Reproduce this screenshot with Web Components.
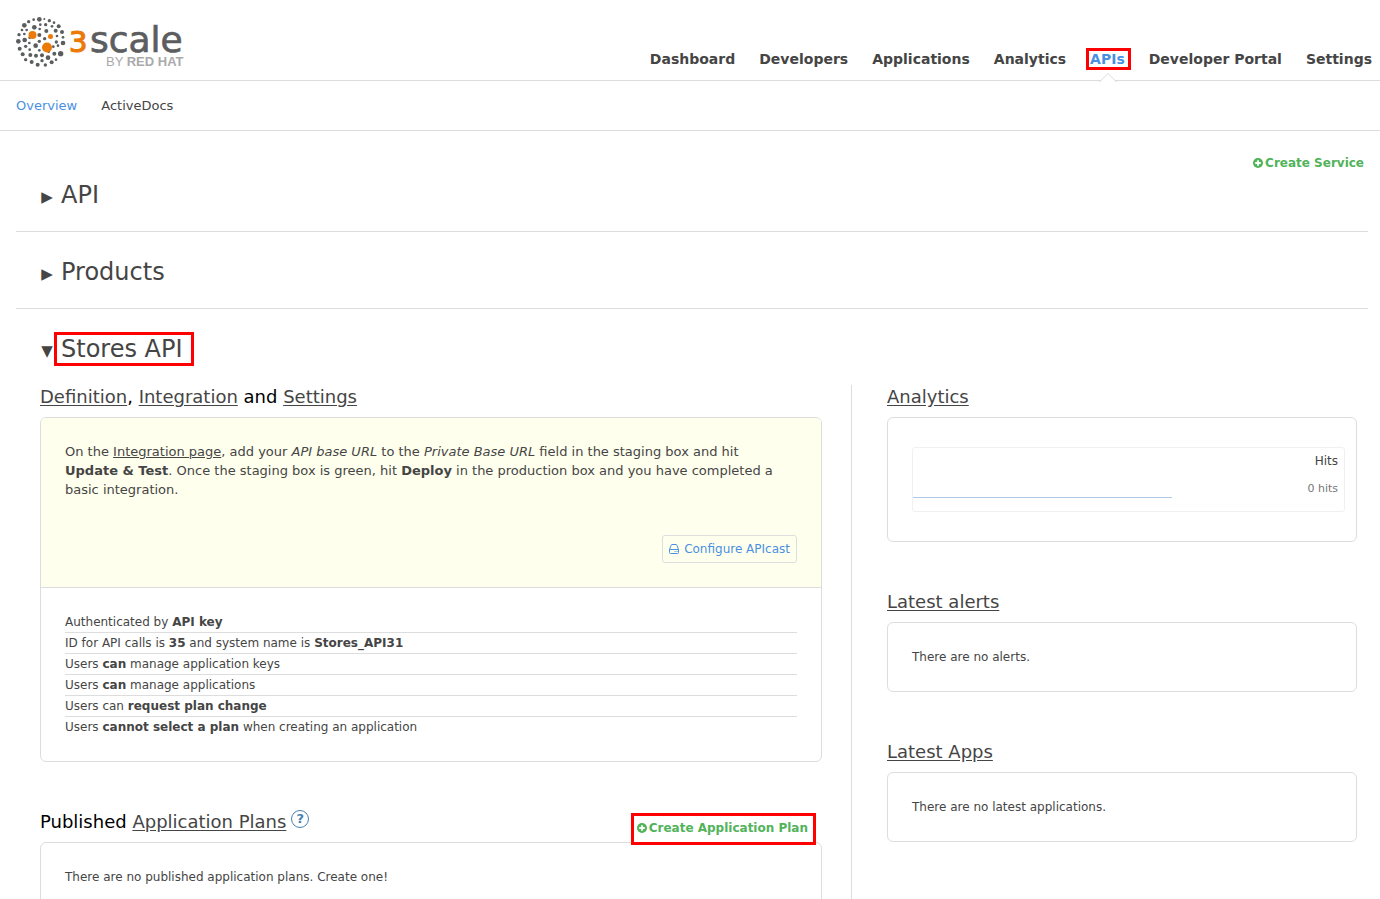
<!DOCTYPE html>
<html lang="en">
<head>
<meta charset="utf-8">
<title>APIs | 3scale</title>
<style>
html { scrollbar-width: none; }
body { margin: 0; background: #fff; color: #454545; font: 12px/20px "DejaVu Sans", sans-serif;
  --line: #ddd; --blue: #4a90e2; --green: #51b35a; --ink: #454545; --mark: #ff0000; }
</style>
</head>
<body>
<console-page></console-page>
<script>
const define = (name, html, setup) => {
  const template = document.createElement('template');
  template.innerHTML = html;
  customElements.define(name, class extends HTMLElement {
    constructor() {
      super();
      this.attachShadow({ mode: 'open' }).append(template.content.cloneNode(true));
    }
    connectedCallback() { if (setup) setup(this, this.shadowRoot); }
  });
};

/* Dots of the logo: x, y, radius on a 150 x 150 field */
const dots = [
  [70,10,7],[53,11,4],[85,9,3],[100,14,5],[38,17,5],[25,28,7],[18,42,4],[9,56,5],[25,54,4],[73,26,4],[89,26,5],[114,20,4],[128,31,6],
  [55,34,7],[32,42,4],[119,44,6],[108,31,4],[91,45,6],[138,48,6],[71,39,4],[7,76,7],[26,72,7],[70,57,6],[86,68,5],[41,65,4],
  [123,60,4],[121,78,5],[141,64,4],[141,81,7],[40,81,4],[59,89,7],[70,76,5],[11,98,6],[29,91,5],[20,115,6],[43,117,6],
  [60,119,6],[78,118,6],[41,101,4],[70,103,4],[112,92,4],[126,89,4],[134,113,8],[115,113,6],[96,125,7],[98,107,4],
  [78,134,5],[47,138,6],[65,146,6],[88,147,5],[107,139,6],[120,131,4],[29,131,5]
];
define('brand-logo', `<style>
:host { display: block; }
a, svg { display: block; }
</style>
<a href="#" aria-label="3scale by Red Hat"><svg width="172" height="54" viewBox="0 0 172 54">
<g class="d" transform="scale(.3333)" fill="#5c5d5f"></g>
<g fill="#ec7a08"><circle cx="16.500" cy="19" r="4"/><circle cx="34.500" cy="20.500" r="2.500"/><circle cx="31" cy="31.500" r="5"/></g>
<text x="53" y="36" font-family="DejaVu Sans" font-size="29" fill="#ec7a08" stroke="#ec7a08" stroke-width="1.200">3</text>
<text x="74" y="36" font-family="DejaVu Sans" font-size="36" fill="#5c5d5f" stroke="#5c5d5f" stroke-width=".7">scale</text>
<text x="90" y="50" font-family="Liberation Sans" font-size="13" fill="#aaa">BY <tspan font-weight="700">RED HAT</tspan></text>
</svg></a>`, (el, root) => {
  root.querySelector('.d').innerHTML = dots.map(([x, y, r]) => `<circle cx="${x}" cy="${y}" r="${r}"/>`).join('');
});

define('main-nav', `<style>
:host { display: block; padding-bottom: 1px; }
nav { display: flex; gap: 24px; font-size: 14px; font-weight: 700; line-height: 20px; }
a { color: var(--ink); text-decoration: none; white-space: nowrap; position: relative; }
a[aria-current] { color: var(--blue); }
.frame { position: absolute; inset: -1px -6px -1px -4px; border: 3px solid var(--mark); }
svg { position: absolute; left: 50%; top: 23px; margin-left: -8px; }
</style>
<nav aria-label="Main">
<a href="#">Dashboard</a><a href="#">Developers</a><a href="#">Applications</a><a href="#">Analytics</a>
<a href="#" aria-current="page">APIs<span class="frame"></span><svg width="18" height="11"><path d="M1 9.500L9 1.500L17 9.500V11H1z" fill="#fff"/><path d="M0 9.500H1L9 1.500L17 9.500H18" fill="none" stroke="#ddd"/></svg></a>
<a href="#">Developer Portal</a><a href="#">Settings</a>
</nav>`);

define('create-link', `<style>
:host { display: block; }
a { display: flex; align-items: center; gap: 2px; color: var(--green); font-size: 12px; font-weight: 700; line-height: 20px; text-decoration: none; white-space: nowrap; }
svg { flex: none; }
</style>
<a href="#"><svg width="10" height="10" viewBox="0 0 10 10"><circle cx="5" cy="5" r="5" fill="#51b35a"/><path d="M5 2.200V7.800M2.200 5H7.800" stroke="#fff" stroke-width="1.800"/></svg><slot></slot></a>`);

define('service-row', `<style>
:host { display: block; border-bottom: 1px solid var(--line); }
:host([open]) { border-bottom: 0; }
h2 { margin: 0; padding: 24px 24px 20px; font-size: 24px; font-weight: 400; line-height: 32px; }
button { all: unset; display: flex; align-items: center; gap: 7px; cursor: pointer; color: var(--ink); width: max-content; }
.arrow { font-size: 15px; line-height: 20px; width: 14px; padding-top: 4px; text-align: center; }
.name { position: relative; }
.frame { display: none; position: absolute; inset: -1px -11px -1px -7px; border: 3px solid var(--mark); }
:host([open]) .frame { display: block; }
</style>
<h2><button type="button"><span class="arrow" aria-hidden="true"></span><span class="name"><slot name="title"></slot><span class="frame"></span></span></button></h2>
<slot></slot>`, (el, root) => {
  const open = el.hasAttribute('open');
  root.querySelector('.arrow').textContent = open ? '▼' : '▶';
  root.querySelector('button').setAttribute('aria-expanded', open);
});

define('info-panel', `<style>
:host { display: block; }
h3 { margin: 0 0 8px; color: #000; font-size: 18px; font-weight: 400; line-height: 24px; }
::slotted(a) { color: var(--ink); text-underline-offset: 2px; }
.box { border: 1px solid var(--line); border-radius: 6px; overflow: hidden; }
.body { padding: 24px; }
</style>
<h3><slot name="heading"></slot></h3>
<div class="box"><slot name="notice"></slot><div class="body"><slot></slot></div></div>
`);

define('help-mark', `<style>
:host { display: inline-block; vertical-align: top; margin-left: 5px; }
button { all: unset; box-sizing: border-box; display: block; width: 18px; height: 18px; border: 1px solid #4682b4; border-radius: 50%; color: #4682b4; font-size: 13px; font-weight: 700; line-height: 16px; text-align: center; cursor: pointer; }
</style><button type="button" aria-label="Help">?</button>`);

define('setup-notice', `<style>
:host { display: block; padding: 24px; background: #ffffee; border-bottom: 1px solid var(--line); }
p { margin: 0 0 36px; padding-right: 16px; font-size: 13px; line-height: 19px; }
p a { color: inherit; }
.actions { display: flex; justify-content: flex-end; }
.button { display: flex; align-items: center; gap: 5px; padding: 3px 6px; border: 1px solid var(--line); border-radius: 3px; color: var(--blue); text-decoration: none; }
</style>
<p>On the <a href="#">Integration page</a>, add your <em>API base URL</em> to the <em>Private Base URL</em> field in the staging box and hit <strong>Update&nbsp;&amp;&nbsp;Test</strong>. Once the staging box is green, hit <strong>Deploy</strong> in the production box and you have completed a <span>basic&nbsp;integration.</span></p>
<div class="actions"><a class="button" href="#"><svg width="10" height="10" viewBox="0 0 10 10" fill="none" stroke="#4a90e2"><path d="M.5 5.500L2 1.500Q2.200 .5 3 .5H7Q7.800 .5 8 1.500L9.500 5.500V8.500Q9.500 9.500 8.500 9.500H1.500Q.5 9.500 .5 8.500ZM.5 5.500H9.500M5.500 7.500H6.500M7.500 7.500H8.500"/></svg>Configure APIcast</a></div>`);

define('service-facts', `<style>
:host { display: block; }
ul { list-style: none; margin: 0; padding: 0; }
li + li { border-top: 1px solid var(--line); }
</style>
<ul>
<li>Authenticated by <strong>API key</strong></li>
<li>ID for API calls is <strong>35</strong> and system name is <strong>Stores_API31</strong></li>
<li>Users <strong>can</strong> manage application keys</li>
<li>Users <strong>can</strong> manage applications</li>
<li>Users can <strong>request plan change</strong></li>
<li>Users <strong>cannot select a plan</strong> when creating an application</li>
</ul>`);

define('hits-chart', `<style>
:host { display: flex; box-sizing: border-box; height: 65px; margin: 5px -13px 5px 0; border: 1px solid #f0f0f0; border-radius: 3px; justify-content: space-between; }
.plot { width: 60%; height: 49px; border-bottom: 1px solid #b3c9ea; }
.figures { padding: 3px 6px; text-align: right; }
.count { margin-top: 8px; font-size: 11px; color: #777; }
</style>
<div class="plot"></div><div class="figures"><div>Hits</div><div class="count">0 hits</div></div>`);

define('service-detail', `<style>
:host { display: grid; grid-template-columns: 782fr 65px 470fr; padding: 0 11px 0 24px; }
.divider { border-left: 1px solid var(--line); margin-left: 29px; }
.column { display: flex; flex-direction: column; gap: 48px; min-width: 0; }
.plans { position: relative; }
.create { position: absolute; top: 3px; right: 6px; border: 3px solid var(--mark); padding: 2px 5px 4px 3px; }
</style>
<div class="column">
<info-panel>
<a slot="heading" href="#">Definition</a><span slot="heading">, </span><a slot="heading" href="#">Integration</a><span slot="heading"> and </span><a slot="heading" href="#">Settings</a>
<setup-notice slot="notice"></setup-notice><service-facts></service-facts>
</info-panel>
<div class="plans">
<info-panel><span slot="heading">Published </span><a slot="heading" href="#">Application Plans</a><help-mark slot="heading"></help-mark>There are no published application plans. Create one!</info-panel>
<create-link class="create">Create Application Plan</create-link>
</div>
</div>
<div class="divider"></div>
<div class="column">
<info-panel><a slot="heading" href="#">Analytics</a><hits-chart></hits-chart></info-panel>
<info-panel><a slot="heading" href="#">Latest alerts</a>There are no alerts.</info-panel>
<info-panel><a slot="heading" href="#">Latest Apps</a>There are no latest applications.</info-panel>
</div>`);

define('console-page', `<style>
:host { display: block; }
header { display: flex; justify-content: space-between; align-items: flex-end; border-bottom: 1px solid var(--line); padding: 16px 8px 10px 16px; }
.sub { display: flex; gap: 24px; padding: 15px 16px 14px; font-size: 13px; border-bottom: 1px solid var(--line); }
.sub a { color: var(--ink); text-decoration: none; }
.sub a[aria-current] { color: var(--blue); }
main { padding: 24px 12px 0 16px; position: relative; }
.create { position: absolute; top: 22px; right: 16px; }
</style>
<header><brand-logo></brand-logo><main-nav></main-nav></header>
<nav class="sub" aria-label="APIs"><a href="#" aria-current="page">Overview</a><a href="#">ActiveDocs</a></nav>
<main>
<create-link class="create">Create Service</create-link>
<service-row><span slot="title">API</span></service-row>
<service-row><span slot="title">Products</span></service-row>
<service-row open><span slot="title">Stores API</span><service-detail></service-detail></service-row>
</main>`);
</script>
</body>
</html>
